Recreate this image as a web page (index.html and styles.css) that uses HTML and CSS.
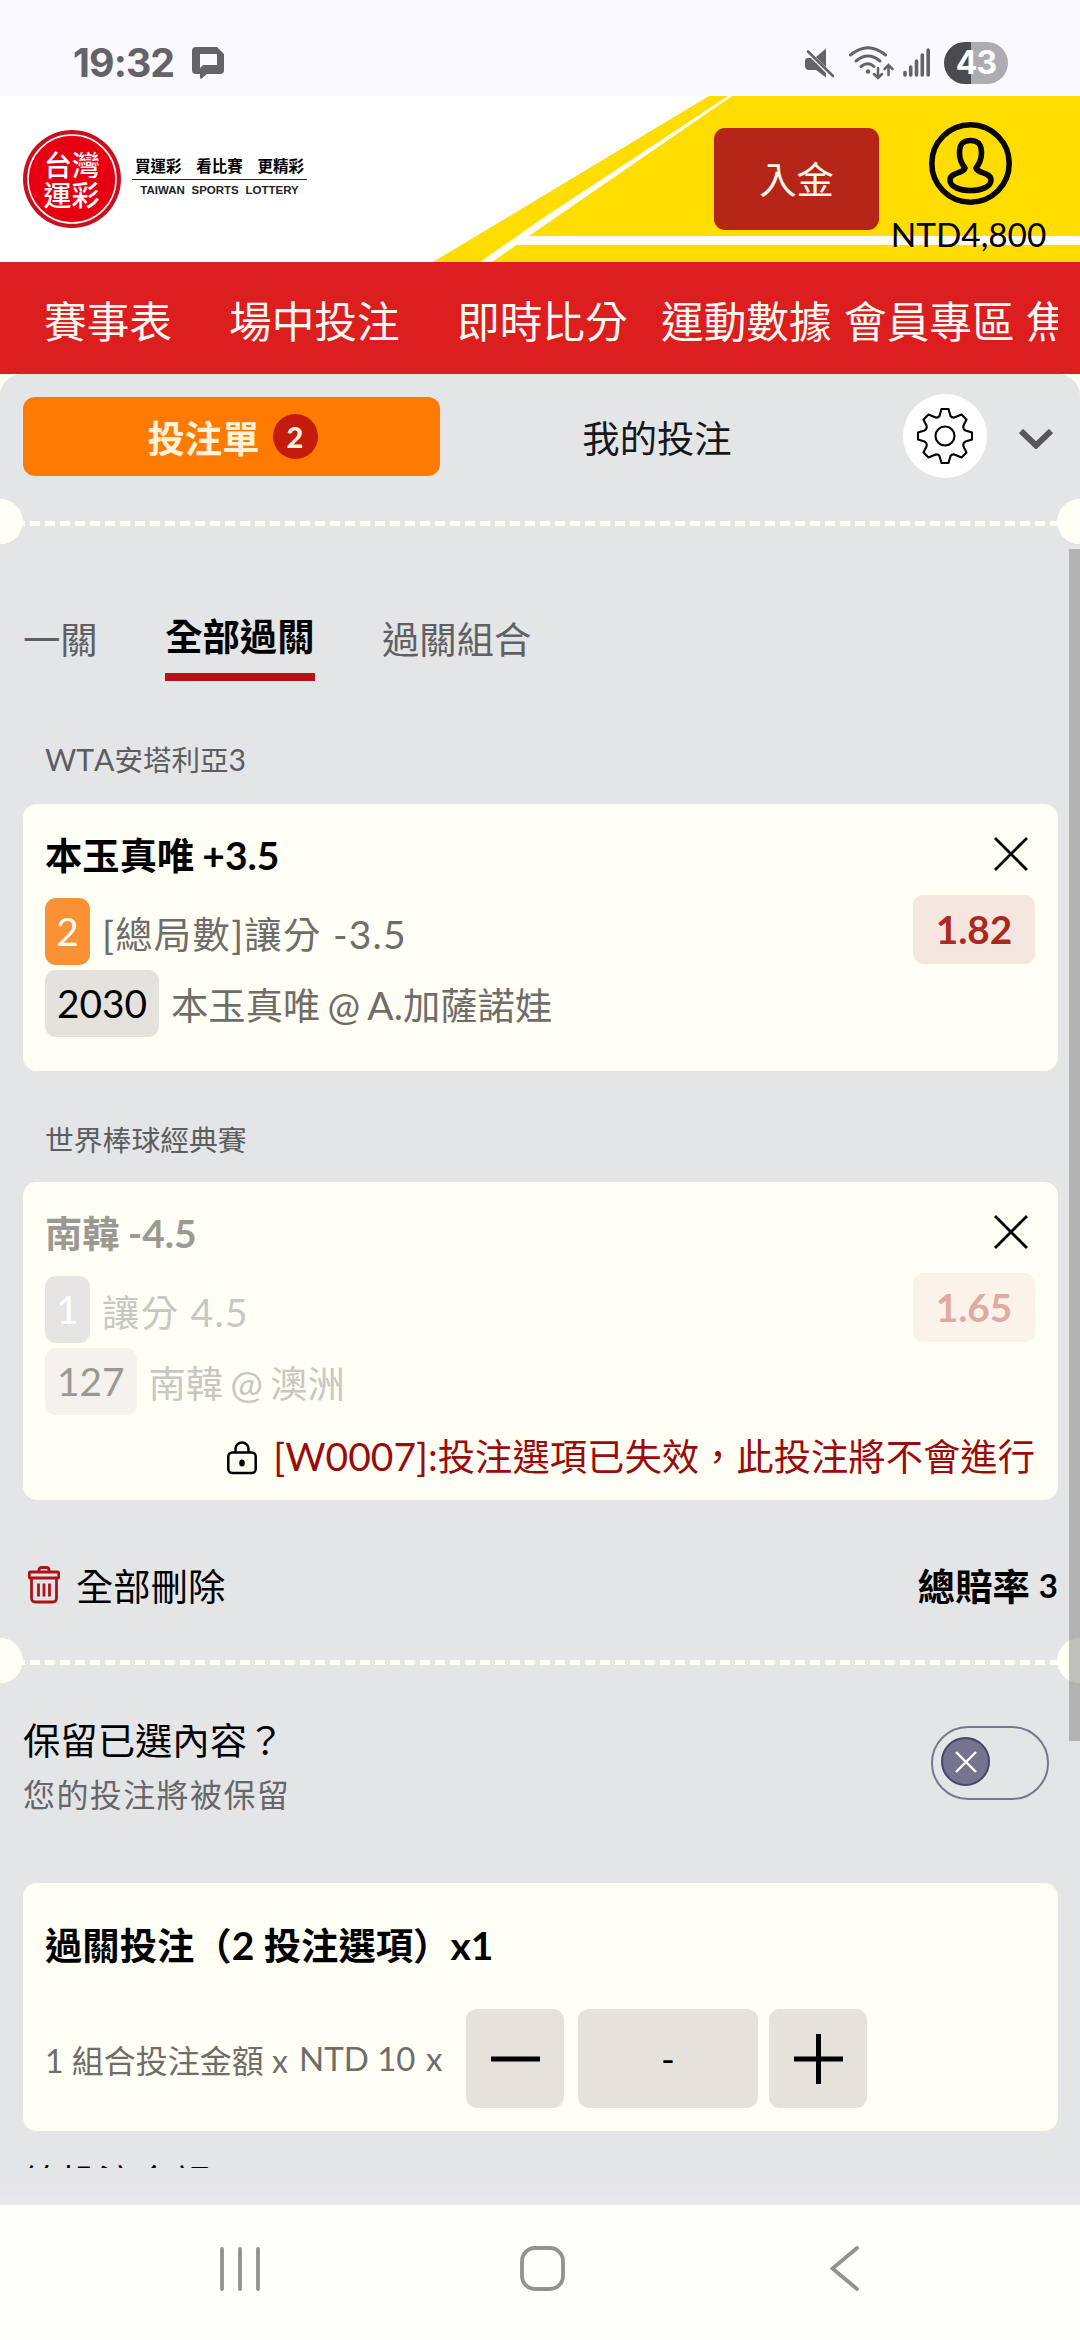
FILE: index.html
```html
<!DOCTYPE html>
<html lang="zh-Hant">
<head>
<meta charset="utf-8">
<title>台灣運彩</title>
<link rel="stylesheet" href="styles.css">
</head>
<body>
<div class="status">
  <span class="clock">19:32</span>
  <svg class="chat" width="32" height="33" viewBox="0 0 32 33"><path fill="#646468" fill-rule="evenodd" d="M4 1H25L32 8V24Q32 28 28 28H15L9 33Q8 33 8 31V28H4Q0 28 0 24V5Q0 1 4 1ZM8 8V22L11 19H25V8Z"/></svg>
  <svg class="sys" width="220" height="44" viewBox="800 41 220 44">
    <g fill="#646468"><path d="M826 48.500V67L816 57Z"/><path d="M808 58H811L826 73V77.500L816 70H808Q805 69 805 66V61Q805 58 808 58Z"/></g>
    <path d="M808 51.500L833 76" stroke="#646468" stroke-width="2.600" stroke-linecap="round"/>
    <g fill="none" stroke="#646468" stroke-width="3" stroke-linecap="round"><path d="M850.500 55Q868 40.500 885.500 55"/><path d="M856 61Q868 51 880 61"/><path d="M861 66.500Q868 61 874 66.500"/></g>
    <circle cx="868" cy="71.500" r="2.200" fill="#646468"/>
    <g fill="none" stroke="#646468" stroke-width="2.500" stroke-linecap="round"><path d="M878 68V77.500M874 74L878 78L882 74M888.500 75V65.500M884.500 69L888.500 65L892.500 69"/></g>
    <g stroke="#646468" stroke-width="3.600" stroke-linecap="round"><path d="M905 72.500V75M910.700 67V75M916.500 61V75M922.300 55V75M928.200 50V75"/></g>
    <path d="M971 42H965A21 21 0 0 0 965 84H971Z" fill="#4b4a50"/><path d="M971 42H987A21 21 0 0 1 987 84H971Z" fill="#adacb2"/>
    <text x="976" y="74" text-anchor="middle" class="batt">43</text>
  </svg>
</div>
<header class="head">
  <svg class="head-bg" width="1080" height="166" viewBox="0 96 1080 166">
    <path fill="#ffdd00" d="M433 262L709 96H1080V262Z"/>
    <path fill="#fffef4" d="M480 262H492L516.500 245H1080V236H529L732 96H728L540 220Z"/>
  </svg>
  <svg class="seal" width="98" height="98" viewBox="0 0 98 98">
    <circle cx="49" cy="49" r="49" fill="#c9101f"/><circle cx="49" cy="49" r="44" fill="#e60012" stroke="#fff" stroke-width="1.500"/>
    <text x="49" y="45.500" text-anchor="middle">台灣</text><text x="48.500" y="75.500" text-anchor="middle">運彩</text>
  </svg>
  <div class="slogan">
    <div class="slogan-zh"><span>買運彩</span><span>看比賽</span><span>更精彩</span></div>
    <div class="slogan-en">TAIWAN SPORTS LOTTERY</div>
  </div>
  <button class="deposit">入金</button>
  <div class="user">
    <svg width="83" height="83" viewBox="0 0 83 83" fill="none" stroke="#070700" stroke-width="5.600" stroke-linejoin="round"><circle cx="41.500" cy="41.500" r="38.700"/><path d="M36 46C32 41 30.500 36 30.500 31C30.500 22 34 18.500 41.500 18.500S52.500 22 52.500 31C52.500 36 51 41 47 46C49 52 62 50 62 58C62 65 52 68.500 41.500 68.500S21 65 21 58C21 50 34 52 36 46Z"/></svg>
    <span>NTD4,800</span>
  </div>
</header>
<nav class="nav"><span>賽事表</span><span>場中投注</span><span>即時比分</span><span>運動數據</span><span>會員專區</span><span class="cut">焦點</span></nav>
<div class="sheet-wrap">
<main class="sheet">
  <div class="tabs">
    <div class="tab-on">投注單<b>2</b></div>
    <div class="tab-off">我的投注</div>
    <div class="gear"><svg width="56" height="56" viewBox="-28 -28 56 56" fill="none" stroke="#000" stroke-width="2.100" stroke-linejoin="round"><circle r="9.500"/><path d="M-3.500 -27H3.500L5.500 -20Q7.500 -17.500 10.500 -19L16.500 -21.500L21.500 -16.500L18.500 -10.500Q17.500 -7 20.500 -5.500L27 -3.500V3.500L20.500 5.500Q17.500 7 18.500 10.500L21.500 16.500L16.500 21.500L10.500 19Q7.500 17.500 5.500 20L3.500 27H-3.500L-5.500 20Q-7.500 17.500 -10.500 19L-16.500 21.500L-21.500 16.500L-18.500 10.500Q-17.500 7 -20.500 5.500L-27 3.500V-3.500L-20.500 -5.500Q-17.500 -7 -18.500 -10.500L-21.500 -16.500L-16.500 -21.500L-10.500 -19Q-7.500 -17.500 -5.500 -20Z"/></svg></div>
    <svg class="chev" width="34" height="20" viewBox="0 0 34 20"><path d="M2 2L17 16.500L32 2" fill="none" stroke="#58585a" stroke-width="6"/></svg>
  </div>
  <div class="tear"></div>
  <div class="modes"><span>一關</span><span class="on">全部過關</span><span>過關組合</span></div>
  <div class="league first"><i>WTA</i>安塔利亞<i>3</i></div>
  <section class="card">
    <div class="info">
      <h2>本玉真唯<i> +3.5</i></h2>
      <p class="market"><b>2</b><span><i>[</i>總局數<i>]</i>讓分<i> -3.5</i></span></p>
      <p class="match"><b>2030</b><span>本玉真唯<i> @ A.</i>加薩諾娃</span></p>
    </div>
    <div class="side"><svg width="34" height="34" viewBox="0 0 34 34"><path d="M1 1L33 33M33 1L1 33" stroke="#000" stroke-width="2.800"/></svg><b>1.82</b></div>
  </section>
  <div class="league">世界棒球經典賽</div>
  <section class="card off">
    <div class="info">
      <h2>南韓<i> -4.5</i></h2>
      <p class="market"><b>1</b><span>讓分<i> 4.5</i></span></p>
      <p class="match"><b>127</b><span>南韓<i> @ </i>澳洲</span></p>
    </div>
    <div class="side"><svg width="34" height="34" viewBox="0 0 34 34"><path d="M1 1L33 33M33 1L1 33" stroke="#000" stroke-width="2.800"/></svg><b>1.65</b></div>
    <div class="error"><svg width="30" height="34" viewBox="0 0 30 34"><rect x="1.300" y="11.500" width="27.400" height="20.500" rx="4" fill="none" stroke="#000" stroke-width="2.500"/><path d="M8.500 11V8A6.500 6.500 0 0 1 21.500 8V11" fill="none" stroke="#000" stroke-width="2.500"/><ellipse cx="15" cy="22" rx="2.800" ry="3.500"/></svg><span><i>[W0007]:</i>投注選項已失效，此投注將不會進行</span></div>
  </section>
  <div class="totals">
    <svg width="32" height="38" viewBox="0 0 32 38" fill="none" stroke="#ab1418" stroke-width="2.800"><path d="M11 6V4Q11 1.500 13.500 1.500H18.500Q21 1.500 21 4V6"/><rect x="1.300" y="6" width="29.400" height="6" rx="1"/><path d="M3.500 12V32Q3.500 36 7.500 36H24.500Q28.500 36 28.500 32V12M10.500 17.500V30.500M16 17.500V30.500M21.500 17.500V30.500"/></svg>
    <span>全部刪除</span><b>總賠率</b><em>3</em>
  </div>
  <div class="tear"></div>
  <div class="keep">
    <div><div class="keep-q">保留已選內容？</div><div class="keep-n">您的投注將被保留</div></div>
    <div class="toggle"><div class="knob"><svg width="22" height="22" viewBox="0 0 22 22"><path d="M1 1L21 21M21 1L1 21" stroke="#fff" stroke-width="2.400"/></svg></div></div>
  </div>
  <section class="stake">
    <h2>過關投注（<i>2 </i>投注選項）<i>x1</i></h2>
    <div class="stake-row">
      <span class="combo">1 組合投注金額 x</span><span class="ntd">NTD 10</span><span class="times">x</span>
      <button class="step"><svg width="49" height="50"><path d="M0 25H49" stroke="#000" stroke-width="5"/></svg></button>
      <div class="amount">-</div>
      <button class="step"><svg width="49" height="50"><path d="M0 25H49M24.500 0V50" stroke="#000" stroke-width="5"/></svg></button>
    </div>
  </section>
  <div class="sum">總投注金額</div>
  <div class="scroll"></div>
</main>
</div>
<footer class="keys">
  <svg width="1080" height="135" viewBox="0 2205 1080 135" fill="none" stroke="#92928e" stroke-width="3.800" stroke-linecap="round"><path d="M222 2249V2289M240 2249V2289M258 2249V2289"/><rect x="522" y="2248" width="41" height="41" rx="13"/><path d="M857 2248L832.500 2268.500L857 2289"/></svg>
</footer>
</body>
</html>
```

FILE: styles.css
```css
* { box-sizing: border-box; margin: 0; padding: 0; }
body { width: 1080px; height: 2340px; overflow: hidden; background: #fffff8; color: #000; font: 400 37.330px/44px Lato, "Noto Sans CJK TC", sans-serif; white-space: nowrap; display: flex; flex-direction: column; }
svg { display: block; flex: none; }
button { border: 0; font: inherit; }
h2 { font-size: 37.330px; font-weight: 700; }
/* Latin runs sit slightly larger than the Han text around them */
i { font-style: normal; font-size: 1.045em; line-height: 1; }

.status { height: 96px; background: #f9f9ff; display: flex; align-items: flex-start; }
.clock { width: 119px; margin: 41px 0 0 73px; font: 700 39.300px/44px Inter, sans-serif; color: #646468; letter-spacing: -0.900px; }
.chat { margin-top: 46px; }
.sys { margin: 41px 0 0 576px; }
.batt { font: 700 32px Inter, sans-serif; fill: #fff; letter-spacing: -1px; }

.head { position: relative; height: 166px; background: #fff; display: flex; align-items: flex-start; }
.head > * { position: relative; }
.head .head-bg { position: absolute; left: 0; top: 0; }
.seal { margin: 34px 0 0 23px; }
.seal text { font: 500 28px "Noto Sans CJK TC", sans-serif; fill: #fff; }
.slogan { width: 175px; margin: 58px 0 0 11px; }
.slogan-zh { display: flex; justify-content: space-between; height: 26px; padding: 0 3px; border-bottom: 1px solid #222; font: 700 15.500px/22px "Noto Sans CJK TC", sans-serif; }
.slogan-en { font: 700 11.500px/20px "Liberation Sans", sans-serif; text-align: center; word-spacing: 3.500px; color: #222; }
.deposit { width: 165px; height: 102px; margin: 32px 0 0 407px; padding-top: 2px; border-radius: 11px; background: #b52619; color: #fff8ef; }
.user { width: 183px; margin-top: 26px; display: flex; flex-direction: column; align-items: center; }
.user span { font-size: 33.400px; line-height: 40px; margin: 9px 4px 0 0; }

.nav { height: 112px; padding: 0 22px 0 44px; background: #dc1e1f; color: #fff8f3; font-size: 42.660px; line-height: 119px; display: grid; grid-template-columns: 185px 228px 204px 183px 182px 1fr; }
.cut { overflow: hidden; }

.sheet-wrap { height: 1831px; background: #fffff0; }
.sheet { position: relative; height: 1831px; overflow: hidden; border-radius: 22px 22px 0 0; background: linear-gradient(#e4e5e7 1795px, #e9e9ee); display: flex; flex-direction: column; }
.tabs { height: 125px; padding: 20px 27px 0 23px; display: flex; align-items: flex-start; }
.tab-on { width: 417px; height: 79px; margin-top: 3px; border-radius: 12px; background: #ff7a00; color: #fff2d9; font-weight: 700; display: flex; align-items: center; justify-content: center; padding: 5px 0 0 2px; }
.tab-on b { width: 45px; height: 45px; border-radius: 50%; background: #c31b0c; font-size: 29px; line-height: 45px; text-align: center; margin: -6px 0 0 13px; }
.tab-off { width: 434px; text-align: center; line-height: 89px; color: #15171a; }
.gear { width: 84px; height: 84px; margin: 0 0 0 29px; border-radius: 50%; background: #fff; display: grid; place-items: center; }
.chev { margin: 35px 0 0 32px; }

.tear { flex: none; height: 45px; background: radial-gradient(circle at 0 22.500px, #fffff6 22.500px, transparent 23px), radial-gradient(circle at 100% 22.500px, #fffff6 22.500px, transparent 23px), repeating-linear-gradient(90deg, #fffff6 0 10px, transparent 10px 15px) 0 22px / 100% 5px no-repeat; }

.modes { height: 137px; margin-left: 23px; padding-top: 71px; display: flex; gap: 67.500px; line-height: 49px; color: #5f6063; }
.modes .on { height: 66px; line-height: 43px; color: #000; font-weight: 700; border-bottom: 8px solid #b31217; }
.league { margin: 36px 0 0 45px; height: 75px; padding-top: 11px; font-size: 28.800px; line-height: 44px; color: #5c5d60; }
.league.first { margin-top: 0; height: 123px; padding-top: 57px; font-size: 28.500px; }
.league i { font-size: 30.200px; font-kerning: none; }

.card { margin: 0 22px 0 23px; height: 267px; padding: 0 23px 0 22px; border-radius: 14px; background: #fffff6; display: grid; grid-template: 1fr / 1fr auto; }
.card.off { height: 318px; grid-template-rows: 235px 1fr; }
.info h2 { padding-top: 30px; height: 94px; }
.info h2 i { word-spacing: -1.500px; }
.info p { display: flex; color: #6e6d69; height: 68px; }
.info p + p { margin-top: 4px; }
.info p b { height: 67px; padding: 0 12px; margin-right: 12px; border-radius: 11px; background: #e5e2dd; color: #000; font-size: 38.800px; font-weight: 400; line-height: 67px; }
.info .market b { width: 45px; padding: 0; text-align: center; }
.market span { letter-spacing: 1.300px; line-height: 73px; }
.match span { line-height: 71px; }
.match i { word-spacing: -2.800px; }
.info .market b { background: #fa9135; color: #fffdf2; }
.off h2, .off .info .match b { color: #9a9993; }
.off .info p { color: #c8c7c2; }
.off .info .market b { background: #e6e5e3; color: #fff; }
.off .info .match b { background: #f5f2ed; }
.side { display: flex; flex-direction: column; align-items: flex-end; }
.side svg { margin: 33px 7px 24px 0; }
.side b { width: 122px; height: 69px; border-radius: 10px; background: #f5e6df; color: #ab2a1f; text-align: center; font-size: 38.800px; line-height: 68px; }
.off .side b { background: #fbf2ea; color: #dfaaa2; }
.error { grid-column: 1 / 3; display: flex; justify-content: flex-end; align-items: flex-start; gap: 16px; color: #9c0b0b; padding-top: 18px; }
.error svg { margin-top: 6px; }

.totals { height: 138px; padding: 65px 22px 0 28px; display: flex; align-items: flex-start; }
.totals svg { margin-top: 1px; }
.totals span { margin: 0 auto 0 16px; }
.totals em { font-style: normal; font-weight: 700; font-size: 33px; margin: -2px 0 0 9px; }

.keep { height: 200px; padding: 36px 31px 0 23px; display: flex; justify-content: space-between; }
.keep-n { font-size: 32px; letter-spacing: 1.400px; line-height: 40px; margin-top: 12px; color: #666769; }
.toggle { width: 118px; height: 74px; margin-top: 7px; border: 2px solid #77788d; border-radius: 37px; padding: 9px 8px; }
.knob { width: 49px; height: 49px; border-radius: 50%; border: 2px solid #45456a; background: #74748f; display: grid; place-items: center; }

.stake { flex: none; height: 248px; margin: 0 22px 0 23px; padding: 41px 22px 0; border-radius: 14px; background: #fffff6; }
.stake h2 { height: 44px; }
.stake-row { display: flex; margin-top: 41px; line-height: 99px; color: #6e6d69; }
.combo { width: 254px; font-size: 32px; padding-top: 2px; }
.ntd { width: 127px; font-size: 33px; }
.times { width: 40px; font-size: 33px; }
.step, .amount { width: 98px; height: 99px; border-radius: 11px; background: #e5e2dc; color: #000; display: grid; place-items: center; }
.amount { width: 180px; margin: 0 11px 0 14px; }
.sum { margin: 30px 0 0 23px; height: 7px; overflow: hidden; line-height: 44px; }
.scroll { position: absolute; right: 0; top: 175px; width: 11px; height: 1192px; background: rgba(128, 128, 128, .5); }
.keys { height: 135px; background: #fffffa; }
```
